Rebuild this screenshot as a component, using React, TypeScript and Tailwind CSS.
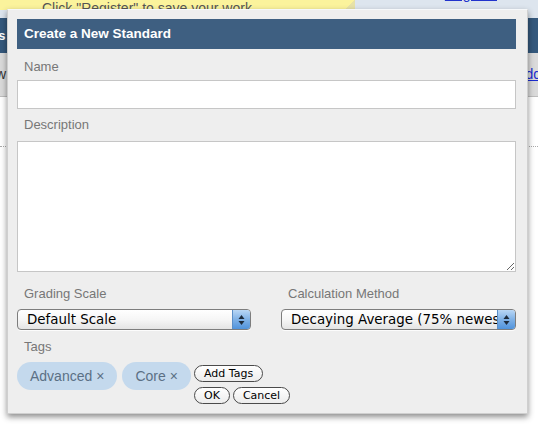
import React from "react";

const sans = "font-['Liberation_Sans',Arial,sans-serif]";
const aqua = "font-['DejaVu_Sans',Verdana,sans-serif]";

const SelectBox = ({ value, className = "" }: { value: string; className?: string }) => (
  <div
    className={`flex h-[21px] items-stretch overflow-hidden rounded-[4px] border border-[#7d7d7d] bg-gradient-to-b from-white via-[#f6f6f6] to-[#e4e4e4] shadow-[0_1px_0_rgba(255,255,255,0.8)] ${className}`}
  >
    <span className={`${aqua} flex-1 overflow-hidden whitespace-nowrap pl-[9px] text-[13.4px] leading-[19px] text-black`}>
      {value}
    </span>
    <span className="flex w-[18px] shrink-0 items-center justify-center border-l border-[#5b8fc8] bg-gradient-to-b from-[#b9d7f5] via-[#7fb1e6] to-[#4f93dc]">
      <svg width="7" height="12" viewBox="0 0 7 12">
        <path d="M3.5 1 L6.5 5 L0.5 5 Z" fill="#1d2b3c" />
        <path d="M3.5 11 L6.5 7 L0.5 7 Z" fill="#1d2b3c" />
      </svg>
    </span>
  </div>
);

const Tag = ({ label }: { label: string }) => (
  <div className={`${sans} flex h-[28px] items-center gap-[4px] rounded-full bg-[#c4d9ed] px-[13px] text-[14px] text-[#5b7085]`}>
    <span>{label}</span>
    <span className="text-[14px]">×</span>
  </div>
);

const PillButton = ({ label, className = "" }: { label: string; className?: string }) => (
  <button
    className={`${aqua} h-[17px] rounded-full border border-[#4a4a4a] bg-gradient-to-b from-white to-[#ececec] px-[9px] text-[11px] leading-[15px] text-black ${className}`}
  >
    {label}
  </button>
);

const FieldLabel = ({ children, className = "" }: { children: React.ReactNode; className?: string }) => (
  <div className={`${sans} pl-[7px] text-[13px] leading-[15px] text-[#777777] ${className}`}>{children}</div>
);

export default function App() {
  return (
    <div className="relative h-[428px] w-[538px] overflow-hidden bg-white">
      {/* page behind the dialog */}
      <div className="flex h-[18px] bg-[#dde5ee]">
        <div className="relative flex h-[10px] w-[355px] items-end bg-[#fbf39c]">
          <span className={`${sans} ml-[42px] mb-[-6px] text-[14px] leading-[16px] text-[#555]`}>
            Click "Register" to save your work.
          </span>
          <span className="absolute right-0 top-0 h-[10px] w-[10px] bg-gradient-to-br from-[#fbf39c] from-50% to-[#e7e2a8] to-50%" />
        </div>
        <div className="flex-1" />
        <span className={`${sans} mr-[41px] mt-[-14px] text-[14px] leading-[16px] text-[#2233cc] underline`}>
          Register
        </span>
      </div>
      <div className={`${sans} flex h-[35px] items-center bg-[#34587c] text-[13px] font-bold text-white`}>
        <span className="ml-[-6px]">ts</span>
      </div>
      <div className={`${sans} flex h-[44px] items-center justify-between border-b border-[#bdbdbd] bg-[#dadada] text-[14px]`}>
        <span className="ml-[-4px] text-[#333]">w</span>
        <span className="mr-[-3px] text-[#1a2bd0] underline">Add</span>
      </div>
      <div className="mt-[49px] border-b border-dotted border-[#aaaaaa]" />

      {/* dialog */}
      <div className="absolute left-[7px] top-[9px] flex h-[405px] w-[521px] flex-col border border-[#cfcfcf] border-t-[#f6f8fa] bg-[#eeeeee] pl-[9px] pr-[11px] pt-[9px] shadow-[0_3px_6px_rgba(0,0,0,0.45)]">
        <div className={`${sans} flex h-[30px] items-center bg-[#3e5f81] pl-[7px] text-[13.5px] font-bold text-white`}>
          Create a New Standard
        </div>

        <FieldLabel className="mt-[10px]">Name</FieldLabel>
        <input className="mt-[6px] h-[29px] w-full border border-[#c6c6c6] bg-white outline-none" />

        <FieldLabel className="mt-[8px]">Description</FieldLabel>
        <textarea className="mt-[9px] h-[131px] w-full border border-[#c6c6c6] bg-white outline-none" />

        <div className="mt-[14px] flex">
          <div className="w-[265px]">
            <FieldLabel>Grading Scale</FieldLabel>
            <SelectBox value="Default Scale" className="mt-[8px] w-[234px]" />
          </div>
          <div className="flex-1">
            <FieldLabel>Calculation Method</FieldLabel>
            <SelectBox value="Decaying Average (75% newest)" className="mt-[8px] w-[235px]" />
          </div>
        </div>

        <FieldLabel className="mt-[9px]">Tags</FieldLabel>
        <div className="mt-[8px] flex items-start gap-[5px]">
          <Tag label="Advanced" />
          <Tag label="Core" />
          <div className="ml-[-2px] mt-[3px] flex flex-col items-start gap-[5px]">
            <PillButton label="Add Tags" />
            <div className="flex gap-[3px]">
              <PillButton label="OK" />
              <PillButton label="Cancel" />
            </div>
          </div>
        </div>
      </div>
    </div>
  );
}
